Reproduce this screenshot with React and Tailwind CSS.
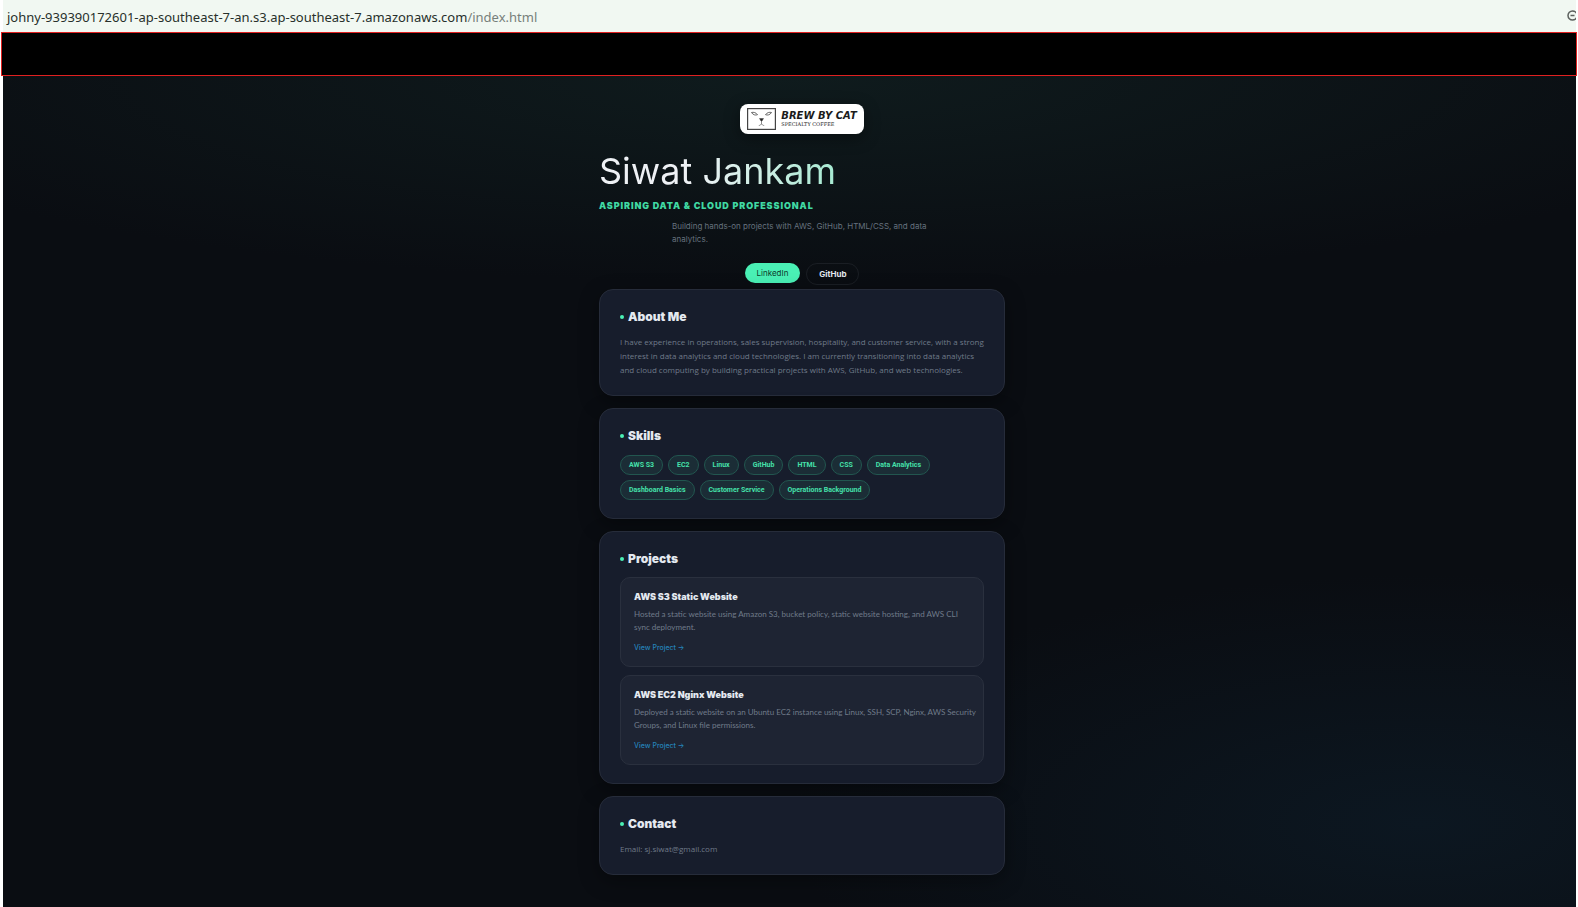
import React from "react";

const skills = [
  "AWS S3", "EC2", "Linux", "GitHub", "HTML", "CSS", "Data Analytics",
  "Dashboard Basics", "Customer Service", "Operations Background",
];

const projects = [
  {
    title: "AWS S3 Static Website",
    text: "Hosted a static website using Amazon S3, bucket policy, static website hosting, and AWS CLI sync\u00a0deployment.",
  },
  {
    title: "AWS EC2 Nginx Website",
    text: "Deployed a static website on an Ubuntu EC2 instance using Linux, SSH, SCP, Nginx, AWS Security Groups, and Linux file permissions.",
  },
];

function ZoomOutIcon() {
  return (
    <svg className="-mr-1 h-[13px] w-[13px] shrink-0" viewBox="0 0 13 13" fill="none" stroke="#5c615e" strokeWidth="1.5">
      <circle cx="5.5" cy="5.5" r="4.5" />
      <path d="M3.500 5.500h4M9 9l3 3" />
    </svg>
  );
}

function Logo() {
  return (
    <div className="flex h-[30px] items-center gap-[5px] rounded-lg bg-white px-[7px] text-[#1b1b1b] shadow-[0_4px_16px_rgba(0,0,0,0.4)]">
      <svg className="h-[22px] w-[29px] shrink-0" viewBox="0 0 29 22" fill="none" stroke="#444">
        <rect x="0.6" y="0.6" width="27.8" height="20.8" strokeWidth="1.2" />
        <path d="M4.500 4.500c2-.6 4.500 0 6 2.200-2.200.8-4.500.2-6-2.200ZM24.500 4.500c-2-.6-4.500 0-6 2.200 2.200.8 4.500.2 6-2.200Z" strokeWidth="0.8" />
        <path d="M12.500 10.500h4l-1.500 2.500h-1Z" fill="#222" strokeWidth="0.5" />
        <path d="M14.500 13v2.500M11.800 17.500c1.400 0 2.300-.8 2.700-2 .4 1.200 1.300 2 2.700 2" strokeWidth="0.6" />
      </svg>
      <div className="flex flex-col pb-[2px]">
        <span className="whitespace-nowrap font-['DejaVu_Sans',sans-serif] text-[10px] font-bold italic leading-[11px]">BREW BY CAT</span>
        <span className="whitespace-nowrap font-['DejaVu_Serif',serif] text-[5px] leading-[6px]">SPECIALTY COFFEE</span>
      </div>
    </div>
  );
}

function Card({ title, children }) {
  return (
    <section className="rounded-[14px] border border-[#262c3a] bg-[#171d2c] px-5 pb-[18px] pt-5 shadow-[0_6px_20px_rgba(0,0,0,0.35)]">
      <h2 className="mb-[11px] flex items-center gap-1 text-[12px] font-black leading-[14px] text-[#e4e9f0]">
        <span className="h-1 w-1 rounded-full bg-[#4af0b5]" />
        {title}
      </h2>
      {children}
    </section>
  );
}

export default function App() {
  return (
    <div className="flex min-h-screen flex-col overflow-hidden bg-white font-['Inter',sans-serif]">
      <header className="ml-[3px] mr-[2px] flex h-8 items-center justify-between overflow-hidden bg-[#f1f8f2] pl-1">
        <p className="pt-[2px] font-['Noto_Sans',sans-serif] text-[13px] leading-5 text-[#27302b]">
          johny-939390172601-ap-southeast-7-an.s3.ap-southeast-7.amazonaws.com<span className="text-[#77807b]">/index.html</span>
        </p>
        <ZoomOutIcon />
      </header>
      <div className="mx-px h-11 border border-[#e02020] bg-black" />
      <main className="ml-[3px] mr-[2px] grow bg-[#0a0d12] bg-[radial-gradient(ellipse_65%_25%_at_50%_0%,#0f1b1d,transparent),radial-gradient(ellipse_40%_30%_at_90%_90%,#0c1721,transparent)] pb-7 pl-[25px] pt-7">
        <div className="mx-auto flex w-full max-w-[406px] flex-col">
          <div className="flex justify-center"><Logo /></div>
          <h1 className="mt-[15px] self-start bg-linear-to-r from-[#eef1f5] from-40% to-[#a6ead2] bg-clip-text text-[36px] font-normal leading-[44px] text-transparent">
            Siwat Jankam
          </h1>
          <p className="mt-[7px] text-[9px] font-black uppercase leading-[11px] tracking-widest text-[#40d9a3]">
            Aspiring Data &amp; Cloud Professional
          </p>
          <p className="mt-[9px] w-[260px] self-center text-[8px] leading-[13px] text-[#66717e]">
            Building hands-on projects with AWS, GitHub, HTML/CSS, and data analytics.
          </p>
          <div className="mb-1 mt-[17px] flex items-start justify-center gap-[6px] text-[8px]">
            <a href="#linkedin" className="rounded-full bg-[#4af0b5] px-3 py-1 leading-3 text-[#0d3b2c]">LinkedIn</a>
            <a href="#github" className="rounded-full border border-[#1a1e24] px-3 py-1 font-bold leading-3 text-[#e4e9f0]">GitHub</a>
          </div>
          <div className="flex flex-col gap-3">
            <Card title="About Me">
              <p className="font-['Open_Sans',sans-serif] text-[8px] leading-[14px] text-[#6f7a89]">
                I have experience in operations, sales supervision, hospitality, and customer service, with a strong interest in data analytics and cloud technologies. I am currently transitioning into data analytics and cloud computing by building practical projects with AWS, GitHub, and web technologies.
              </p>
            </Card>
            <Card title="Skills">
              <ul className="flex flex-wrap gap-[5px] pt-px">
                {skills.map((s) => (
                  <li key={s} className="rounded-full border border-[#22564f] bg-[#1b2d36] px-2 font-['Roboto',sans-serif] text-[7px] font-bold leading-[18px] text-[#45e0aa]">{s}</li>
                ))}
              </ul>
            </Card>
            <Card title="Projects">
              <div className="flex flex-col gap-2">
                {projects.map((p) => (
                  <article key={p.title} className="rounded-[10px] border border-[#2a303e] bg-[#1e2433] py-[13px] pl-[13px] pr-1">
                    <h3 className="text-[9px] font-black leading-3 text-[#e4e9f0]">{p.title}</h3>
                    <p className="mt-[5px] font-['Lato',sans-serif] text-[8px] leading-[13px] text-[#707b8a]">{p.text}</p>
                    <a href="#project" className="mt-2 block text-[7px] font-medium leading-[11px] text-[#2583ba]">View Project →</a>
                  </article>
                ))}
              </div>
            </Card>
            <Card title="Contact">
              <p className="font-['Open_Sans',sans-serif] text-[8px] leading-[14px] text-[#6f7a89]">Email: sj.siwat@gmail.com</p>
            </Card>
          </div>
        </div>
      </main>
    </div>
  );
}
